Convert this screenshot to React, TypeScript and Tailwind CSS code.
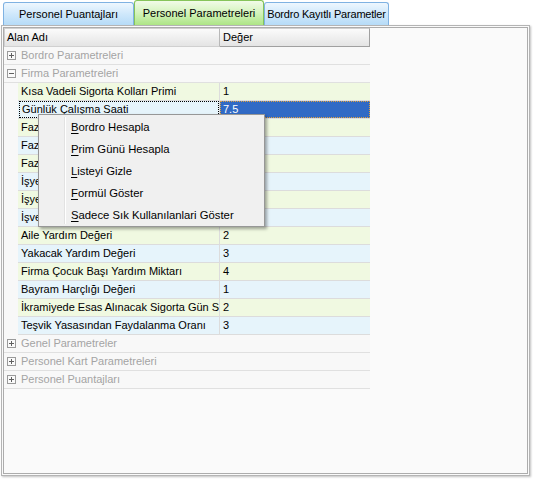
import React from "react";

type Row =
  | { kind: "group"; label: string; open?: boolean }
  | { kind: "item"; label: string; value: string; selected?: boolean };

const rows: Row[] = [
  { kind: "group", label: "Bordro Parametreleri" },
  { kind: "group", label: "Firma Parametreleri", open: true },
  { kind: "item", label: "Kısa Vadeli Sigorta Kolları Primi", value: "1" },
  { kind: "item", label: "Günlük Çalışma Saati", value: "7.5", selected: true },
  { kind: "item", label: "Fazla Mesai Çarpanı", value: "1.5" },
  { kind: "item", label: "Fazla Mesai Saati", value: "2" },
  { kind: "item", label: "Fazla Çalışma Oranı", value: "1" },
  { kind: "item", label: "İşyeri Sigorta Primi", value: "2" },
  { kind: "item", label: "İşyeri Kodu", value: "1" },
  { kind: "item", label: "İşveren Payı", value: "3" },
  { kind: "item", label: "Aile Yardım Değeri", value: "2" },
  { kind: "item", label: "Yakacak Yardım Değeri", value: "3" },
  { kind: "item", label: "Firma Çocuk Başı Yardım Miktarı", value: "4" },
  { kind: "item", label: "Bayram Harçlığı Değeri", value: "1" },
  { kind: "item", label: "İkramiyede Esas Alınacak Sigorta Gün Sayısı", value: "2" },
  { kind: "item", label: "Teşvik Yasasından Faydalanma Oranı", value: "3" },
  { kind: "group", label: "Genel Parametreler" },
  { kind: "group", label: "Personel Kart Parametreleri" },
  { kind: "group", label: "Personel Puantajları" },
];

function Expander({ open }: { open?: boolean }) {
  return (
    <svg width="9" height="9" viewBox="0 0 9 9" className="shrink-0">
      <rect x="0.5" y="0.5" width="8" height="8" fill="#fafafa" stroke="#9a9a9a" />
      <line x1="2" y1="4.5" x2="7" y2="4.5" stroke="#606060" />
      {!open && <line x1="4.5" y1="2" x2="4.5" y2="7" stroke="#606060" />}
    </svg>
  );
}

function MenuItem({ first, rest }: { first: string; rest: string }) {
  return (
    <div className="h-[22px] flex items-center pl-[32px] text-[11.3px] text-black whitespace-nowrap">
      <span className="underline underline-offset-[2px]">{first}</span>
      <span>{rest}</span>
    </div>
  );
}

export default function App() {
  let itemIndex = 0;
  return (
    <div
      className="w-[535px] h-[482px] bg-white relative overflow-hidden text-[11px] text-black"
      style={{ fontFamily: '"Liberation Sans", Arial, sans-serif' }}
    >
      {/* Tabs */}
      <div className="h-[25px] flex items-end pl-[3px] whitespace-nowrap">
        <div className="h-[23px] w-[131px] border border-b-0 border-[#7fb2e2] rounded-t-[3px] bg-gradient-to-b from-[#eef7fe] via-[#cfe8fb] to-[#b6dbf7] flex items-center justify-center pt-[1px]">
          Personel Puantajları
        </div>
        <div className="h-[25px] w-[130px] border border-b-0 border-[#86c45a] rounded-t-[3px] bg-gradient-to-b from-[#f1fbe8] via-[#d3f3bb] to-[#ade586] flex items-center justify-center">
          Personel Parametreleri
        </div>
        <div className="h-[23px] w-[125px] border border-b-0 border-[#7fb2e2] rounded-t-[3px] bg-gradient-to-b from-[#eef7fe] via-[#cfe8fb] to-[#b6dbf7] flex items-center justify-center pt-[1px] tracking-[-0.2px]">
          Bordro Kayıtlı Parametler
        </div>
      </div>

      {/* Panel */}
      <div className="ml-[1px] w-[529px] h-[451px] border border-[#b4b4b4] bg-[#fafafa] p-[1px] shadow-[1px_1px_2px_rgba(0,0,0,0.25)]">
        <div className="w-full h-full border border-[#acacac] bg-[#fafafa] relative">
          {/* Header */}
          <div className="flex w-[366px] h-[19px] text-black">
            <div className="w-[216px] h-full border border-[#d0d0d0] border-r-[#b8b8b8] bg-gradient-to-b from-[#fbfbfb] to-[#e4e4e4] flex items-center pl-[2px]">
              Alan Adı
            </div>
            <div className="flex-1 h-full border-y border-r border-[#a0a0a0] border-t-[#d0d0d0] bg-gradient-to-b from-[#fbfbfb] to-[#e4e4e4] flex items-center pl-[3px]">
              Değer
            </div>
          </div>

          {/* Rows */}
          <div className="w-[366px] whitespace-nowrap">
            {rows.map((r, i) => {
              if (r.kind === "group") {
                return (
                  <div
                    key={i}
                    className="h-[18px] flex items-center border-b border-[#e0e0e0] bg-[#f8f8f8] pl-[3px] gap-[5px] text-[#a4a4a4]"
                  >
                    <Expander open={r.open} />
                    <span>{r.label}</span>
                  </div>
                );
              }
              const green = itemIndex % 2 === 0;
              itemIndex++;
              const bg = green ? "bg-[#f0f9e1]" : "bg-[#e6f4fb]";
              return (
                <div key={i} className="h-[18px] flex bg-[#f8f8f8]">
                  <div className="w-[14px] shrink-0" />
                  <div
                    className={`w-[202px] shrink-0 h-full border-b border-r border-[#dcdcdc] ${bg} flex items-center pl-[3px] overflow-hidden`}
                  >
                    {r.selected ? (
                      <span className="h-[17px] -ml-[2px] pl-[2px] w-[200px] border border-dotted border-black flex items-center">
                        {r.label}
                      </span>
                    ) : (
                      r.label
                    )}
                  </div>
                  {r.selected ? (
                    <div className="flex-1 h-full border-b border-[#dcdcdc] bg-[#316ac5]">
                      <div className="h-[17px] border border-dotted border-[#e0a040] text-white flex items-center pl-[2px]">
                        {r.value}
                      </div>
                    </div>
                  ) : (
                    <div className={`flex-1 h-full border-b border-[#dcdcdc] ${bg} flex items-center pl-[3px]`}>
                      {r.value}
                    </div>
                  )}
                </div>
              );
            })}
          </div>

          {/* Context menu */}
          <div className="absolute left-[34px] top-[86px] w-[227px] h-[113px] bg-[#f0f0f0] border border-[#979797] py-[1px] shadow-[2px_2px_3px_rgba(0,0,0,0.35)]">
            <div className="absolute left-[25px] top-[2px] bottom-[2px] w-[2px] border-l border-[#e2e2e2] border-r border-r-white" />
            <MenuItem first="B" rest="ordro Hesapla" />
            <MenuItem first="P" rest="rim Günü Hesapla" />
            <MenuItem first="L" rest="isteyi Gizle" />
            <MenuItem first="F" rest="ormül Göster" />
            <MenuItem first="S" rest="adece Sık Kullanılanlari Göster" />
          </div>
        </div>
      </div>
    </div>
  );
}
